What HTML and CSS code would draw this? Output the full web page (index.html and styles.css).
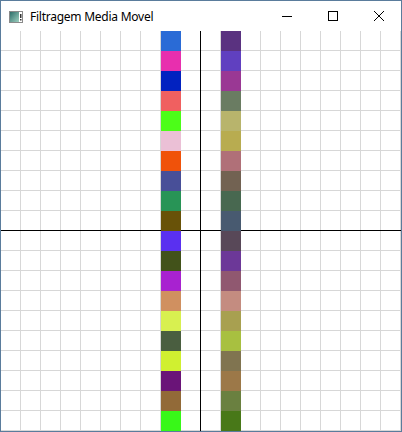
FILE: index.html
```html
<!DOCTYPE html>
<html lang="pt">
<head>
<meta charset="utf-8">
<title>Filtragem Media Movel</title>
<link rel="stylesheet" href="styles.css">
</head>
<body>
<div class="window">
  <div class="titlebar">
    <svg class="app-icon" width="14" height="12" viewBox="0 0 14 12">
      <defs>
        <linearGradient id="g" x1="0" y1="0" x2="1" y2="1">
          <stop offset="0" stop-color="#2e6e6a"/>
          <stop offset="1" stop-color="#9ed0c0"/>
        </linearGradient>
      </defs>
      <rect x="0.5" y="0.5" width="13" height="11" fill="#fff" stroke="#8a8a8a"/>
      <rect x="1" y="1" width="9" height="10" fill="url(#g)"/>
      <rect x="11" y="3" width="1.5" height="4" fill="#333"/>
      <rect x="11" y="8" width="1.5" height="1.5" fill="#333"/>
    </svg>
    <span class="title">Filtragem Media Movel</span>
    <div class="controls">
      <div class="btn"><svg width="10" height="10" viewBox="0 0 10 10"><path d="M0 5.5H10" stroke="#000" stroke-width="1"/></svg></div>
      <div class="btn"><svg width="10" height="10" viewBox="0 0 10 10"><rect x="0.5" y="0.5" width="9" height="9" fill="none" stroke="#000" stroke-width="1"/></svg></div>
      <div class="btn"><svg width="10" height="10" viewBox="0 0 10 10"><path d="M0 0L10 10M10 0L0 10" stroke="#000" stroke-width="1"/></svg></div>
    </div>
  </div>
  <div class="canvas">
    <div class="axis-x"></div>
    <div class="axis-y"></div>
    <div class="col">
      <div class="cell" style="background:#2a6bd6"></div>
      <div class="cell" style="background:#e82fae"></div>
      <div class="cell" style="background:#0222c0"></div>
      <div class="cell" style="background:#f06060"></div>
      <div class="cell" style="background:#4cfe18"></div>
      <div class="cell" style="background:#ebc0d6"></div>
      <div class="cell" style="background:#f0520a"></div>
      <div class="cell" style="background:#484f98"></div>
      <div class="cell" style="background:#289456"></div>
      <div class="cell" style="background:#685208"></div>
      <div class="cell" style="background:#5a30f0"></div>
      <div class="cell" style="background:#42521a"></div>
      <div class="cell" style="background:#a822d0"></div>
      <div class="cell" style="background:#d09060"></div>
      <div class="cell" style="background:#d8f050"></div>
      <div class="cell" style="background:#4a5e40"></div>
      <div class="cell" style="background:#d0f030"></div>
      <div class="cell" style="background:#6a1478"></div>
      <div class="cell" style="background:#926a38"></div>
      <div class="cell" style="background:#38f818"></div>
    </div>
    <div class="col">
      <div class="cell" style="background:#5a3280"></div>
      <div class="cell" style="background:#6040c0"></div>
      <div class="cell" style="background:#9a3894"></div>
      <div class="cell" style="background:#6a7c62"></div>
      <div class="cell" style="background:#b8b46c"></div>
      <div class="cell" style="background:#b8ac50"></div>
      <div class="cell" style="background:#b07078"></div>
      <div class="cell" style="background:#726252"></div>
      <div class="cell" style="background:#486850"></div>
      <div class="cell" style="background:#485a70"></div>
      <div class="cell" style="background:#584858"></div>
      <div class="cell" style="background:#6c3898"></div>
      <div class="cell" style="background:#905870"></div>
      <div class="cell" style="background:#c48c80"></div>
      <div class="cell" style="background:#a8a050"></div>
      <div class="cell" style="background:#a8c040"></div>
      <div class="cell" style="background:#807450"></div>
      <div class="cell" style="background:#9c7848"></div>
      <div class="cell" style="background:#6a8040"></div>
      <div class="cell" style="background:#487818"></div>
    </div>
  </div>
</div>
</body>
</html>
```
FILE: styles.css
```css
html, body {
  margin: 0;
  padding: 0;
  background: #fff;
}
.window {
  width: 400px;
  height: 430px;
  border: 1px solid #5a7c9c;
  display: flex;
  flex-direction: column;
  background: #fff;
}
.titlebar {
  height: 30px;
  display: flex;
  align-items: center;
  font-family: "Noto Sans", "Open Sans", sans-serif;
  font-size: 12px;
  color: #000;
}
.app-icon {
  margin-left: 8px;
  margin-top: 1px;
  flex: none;
}
.title {
  margin-left: 7px;
  flex: 1;
  white-space: nowrap;
  letter-spacing: -0.25px;
}
.controls {
  display: flex;
  height: 30px;
  margin-right: -1px;
}
.btn {
  width: 46px;
  height: 30px;
  display: flex;
  align-items: center;
  justify-content: center;
}
.canvas {
  position: relative;
  width: 400px;
  height: 400px;
  display: flex;
  padding-left: 160px;
  gap: 40px;
  box-sizing: border-box;
  background-color: #fff;
  background-image:
    linear-gradient(to right, #d7d7d7 1px, transparent 1px),
    linear-gradient(to bottom, #d7d7d7 1px, transparent 1px);
  background-size: 20px 20px;
  background-position: 19px 19px;
}
.axis-x {
  position: absolute;
  left: 0;
  top: 199px;
  width: 400px;
  height: 1px;
  background: #000;
}
.axis-y {
  position: absolute;
  left: 199px;
  top: 0;
  width: 1px;
  height: 400px;
  background: #000;
}
.col {
  position: relative;
  width: 20px;
  display: flex;
  flex-direction: column;
}
.cell {
  height: 20px;
  flex: none;
}
```
